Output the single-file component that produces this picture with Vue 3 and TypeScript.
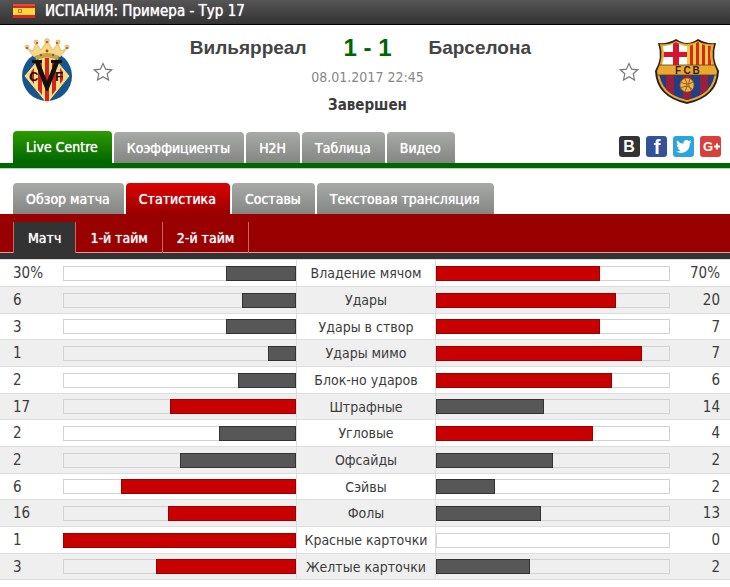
<script setup lang="ts">
import { computed, ref } from 'vue'

interface Stat {
  label: string
  home: number
  away: number
  unit?: string
}

const mainTabs: string[] = ['Live Centre', 'Коэффициенты', 'H2H', 'Таблица', 'Видео']
const subTabs: string[] = ['Обзор матча', 'Статистика', 'Составы', 'Текстовая трансляция']
const periods: string[] = ['Матч', '1-й тайм', '2-й тайм']

const mainTab = ref('Live Centre')
const subTab = ref('Статистика')
const period = ref('Матч')

const stats: Stat[] = [
  { label: 'Владение мячом', home: 30, away: 70, unit: '%' },
  { label: 'Удары', home: 6, away: 20 },
  { label: 'Удары в створ', home: 3, away: 7 },
  { label: 'Удары мимо', home: 1, away: 7 },
  { label: 'Блок-но ударов', home: 2, away: 6 },
  { label: 'Штрафные', home: 17, away: 14 },
  { label: 'Угловые', home: 2, away: 4 },
  { label: 'Офсайды', home: 2, away: 2 },
  { label: 'Сэйвы', home: 6, away: 2 },
  { label: 'Фолы', home: 16, away: 13 },
  { label: 'Красные карточки', home: 1, away: 0 },
  { label: 'Желтые карточки', home: 3, away: 2 },
]

const rows = computed(() =>
  stats.map((s) => {
    const homeShare = Math.floor((s.home / (s.home + s.away)) * 100)
    return { ...s, homeShare, awayShare: 100 - homeShare }
  }),
)
</script>

<template>
  <div class="page">
    <header class="league">
      <svg class="flag" viewBox="0 0 22 14" aria-hidden="true">
        <rect width="22" height="14" rx="1" fill="#d8281f" />
        <rect y="4" width="22" height="7" fill="#fbd93a" />
        <rect x="5" y="5" width="4" height="4" rx="1" fill="#c8702a" />
        <rect x="6" y="6" width="2" height="2" fill="#e9c9a0" />
        <rect width="22" height="2" fill="#f0604c" opacity="0.6" />
      </svg>
      <span>ИСПАНИЯ: Примера - Тур 17</span>
    </header>

    <section class="match">
      <svg class="crest-home" viewBox="0 0 52 66" aria-hidden="true">
        <circle cx="26" cy="38" r="25" fill="#17568c" />
        <path d="M26 12 L48 38 L26 65 L4 38 Z" fill="#f8df7c" stroke="#f3e3a0" stroke-width="1" />
        <path d="M17 25 L21 21 L21 57 L17 52 Z M24 20 H28 V63 H24 Z M31 21 L35 25 V52 L31 57 Z M10 34 L13 30 V46 L10 42 Z M39 30 L42 34 V42 L39 46 Z" fill="#d8201c" />
        <path d="M11 22 H21 V25 H19 L26 43 L33 25 H30 V22 H41 V25 H38 L27 53 H25 L14 25 H11 Z" fill="#111" />
        <text x="8" y="43" class="crest-letter">C</text>
        <text x="34" y="43" class="crest-letter">F</text>
        <path d="M13 19 L6 10 L12 13 L15 5 L20 12 L26 3 L32 12 L37 5 L40 13 L46 10 L39 19 Q26 14 13 19 Z" fill="#f4d988" stroke="#d9ad50" stroke-width="0.7" />
        <path d="M14 18 Q26 12 38 18 L37 22 Q26 17 15 22 Z" fill="#cda044" />
        <g fill="#ead07a" stroke="#d6a64b" stroke-width="0.6">
          <circle cx="6" cy="9" r="2" /><circle cx="15" cy="4" r="2" /><circle cx="26" cy="3" r="2.3" />
          <circle cx="37" cy="4" r="2" /><circle cx="46" cy="9" r="2" />
        </g>
        <g fill="#cc3425">
          <circle cx="6" cy="10" r="1" /><circle cx="16" cy="5" r="1" /><circle cx="26" cy="4" r="1" />
          <circle cx="36" cy="5" r="1" /><circle cx="46" cy="10" r="1" /><circle cx="26" cy="13" r="1.4" />
        </g>
        <g fill="#487a4a"><circle cx="20" cy="17" r="1.2" /><circle cx="32" cy="17" r="1.2" /></g>
      </svg>
      <button class="star" type="button" aria-label="Вильярреал">
        <svg viewBox="0 0 20 20"><path d="M10 1.5 L12.6 7.2 L18.7 7.8 L14.2 11.8 L15.5 18 L10 14.8 L4.5 18 L5.8 11.8 L1.3 7.8 L7.4 7.2 Z" /></svg>
      </button>

      <div class="summary">
        <h2 class="team team-home">Вильярреал</h2>
        <strong class="score">1 - 1</strong>
        <h2 class="team">Барселона</h2>
        <p class="date">08.01.2017 22:45</p>
        <p class="status">Завершен</p>
      </div>

      <button class="star" type="button" aria-label="Барселона">
        <svg viewBox="0 0 20 20"><path d="M10 1.5 L12.6 7.2 L18.7 7.8 L14.2 11.8 L15.5 18 L10 14.8 L4.5 18 L5.8 11.8 L1.3 7.8 L7.4 7.2 Z" /></svg>
      </button>
      <svg class="crest-away" viewBox="0 0 66 66" aria-hidden="true">
        <defs>
          <clipPath id="shield"><path d="M9 8 Q16 8 22 4 Q28 8 33 8 Q38 8 44 4 Q50 8 57 8 Q54 22 61 33 Q60 56 33 62 Q6 56 5 33 Q12 22 9 8 Z" /></clipPath>
        </defs>
        <path d="M4 5 Q14 6 22 1 Q28 5 33 5 Q38 5 44 1 Q52 6 62 5 Q57 20 65 33 Q64 59 33 66 Q2 59 1 33 Q9 20 4 5 Z" fill="#2a2118" />
        <path d="M6 6 Q15 7 22 3 Q28 6 33 6 Q38 6 44 3 Q51 7 60 6 Q56 20 63 33 Q62 58 33 64 Q4 58 3 33 Q10 20 6 6 Z" fill="#eca82e" />
        <g clip-path="url(#shield)">
          <rect x="5" y="4" width="28" height="23" fill="#fff" />
          <rect x="19" y="4" width="6" height="23" fill="#d8142c" />
          <rect x="5" y="14" width="28" height="5" fill="#d8142c" />
          <rect x="33" y="4" width="28" height="23" fill="#f7c93e" />
          <path d="M36 4h3v23h-3z M42 4h3v23h-3z M48 4h3v23h-3z M54 4h3v23h-3z" fill="#d12a28" />
          <rect x="3" y="27" width="60" height="10" fill="#eca82e" />
          <rect x="3" y="37" width="60" height="27" fill="#233e86" />
          <path d="M12 37h8v27h-8z M29 37h8v27h-8z M46 37h8v27h-8z" fill="#98203f" />
        </g>
        <path d="M4 27 H62 M3 37 H63" stroke="#59401b" stroke-width="0.8" />
        <text x="24" y="36" class="fcb">F</text>
        <text x="33" y="36" class="fcb">C</text>
        <text x="42" y="36" class="fcb">B</text>
        <circle cx="33" cy="47" r="7" fill="#efb443" stroke="#8a5a1a" stroke-width="0.6" />
        <path d="M27 44 Q33 48 39 44 M27 50 Q33 46 38 51 M31 41 Q35 47 31 53 M36 41 Q33 47 37 52" fill="none" stroke="#99601f" stroke-width="1" />
      </svg>
    </section>

    <nav class="tabs tabs-main">
      <button
        v-for="tab in mainTabs"
        :key="tab"
        type="button"
        class="tab"
        :class="{ 'tab-green': tab === mainTab }"
        @click="mainTab = tab"
      >{{ tab }}</button>
      <div class="social">
        <a href="#vk" class="vk" aria-label="ВКонтакте"><svg viewBox="0 0 21 21"><text x="10" y="16" font-size="16">B</text></svg></a>
        <a href="#facebook" class="fb" aria-label="Facebook"><svg viewBox="0 0 21 21"><text x="11" y="18" font-size="20">f</text></svg></a>
        <a href="#twitter" class="tw" aria-label="Twitter">
          <svg viewBox="0 0 21 21"><path d="M3 15.500Q6 15.600 7.600 14.200Q5.400 13.900 4.700 12Q5.600 12.100 6.200 11.800Q3.700 10.900 3.700 8.400Q4.400 8.800 5.100 8.800Q2.900 6.900 4.200 4.500Q6.800 7.600 10.500 7.800Q10 4.200 13.400 3.900Q14.900 3.900 15.800 4.900Q17 4.700 17.900 4.100Q17.500 5.300 16.500 5.900Q17.600 5.800 18.500 5.300Q17.700 6.600 16.800 7.200Q17 12.500 13.300 15.200Q8.500 18.500 3 15.500Z" /></svg>
        </a>
        <a href="#google" class="gp" aria-label="Google+"><svg viewBox="0 0 21 21"><text x="8" y="15" font-size="13">G</text><path d="M14 9.500h2v-2h2v2h2v2h-2v2h-2v-2h-2z" /></svg></a>
      </div>
    </nav>

    <nav class="tabs tabs-sub">
      <button
        v-for="tab in subTabs"
        :key="tab"
        type="button"
        class="tab"
        :class="{ 'tab-red': tab === subTab }"
        @click="subTab = tab"
      >{{ tab }}</button>
    </nav>

    <nav class="periods">
      <button
        v-for="p in periods"
        :key="p"
        type="button"
        class="period"
        :class="{ 'period-active': p === period }"
        @click="period = p"
      >{{ p }}</button>
    </nav>

    <table class="stats">
      <colgroup>
        <col class="col-home" />
        <col />
        <col class="col-label" />
        <col />
        <col class="col-away" />
      </colgroup>
      <tbody>
        <tr v-for="row in rows" :key="row.label">
          <td class="value-home">{{ row.home }}{{ row.unit }}</td>
          <td class="cell-home">
            <div class="bar bar-home">
              <div v-if="row.homeShare" class="fill" :class="{ lead: row.home > row.away }" :style="{ width: row.homeShare + '%' }"></div>
            </div>
          </td>
          <th scope="row">{{ row.label }}</th>
          <td>
            <div class="bar">
              <div v-if="row.away" class="fill" :class="{ lead: row.away > row.home }" :style="{ width: row.awayShare + '%' }"></div>
            </div>
          </td>
          <td class="value-away">{{ row.away }}{{ row.unit }}</td>
        </tr>
      </tbody>
    </table>
  </div>
</template>

<style>
body {
  background: #fff;
}
</style>

<style scoped>
.page {
  font-family: 'DejaVu Sans Condensed', 'Noto Sans', sans-serif;
  font-size: 14px;
  color: #3c3c3c;
}

button {
  margin: 0;
  border: 0;
  padding: 0;
  background: none;
  font: inherit;
  cursor: pointer;
}

.league {
  display: flex;
  align-items: center;
  gap: 10px;
  box-sizing: border-box;
  height: 25px;
  padding: 0 13px 3px;
  border-bottom: 1px solid #000;
  background: linear-gradient(#555, #333);
  color: #fff;
  font-size: 15px;
  text-shadow: 0 0 1px #fff;
  white-space: nowrap;
}

.flag {
  width: 22px;
  height: 14px;
}

.match {
  display: flex;
  align-items: flex-start;
  padding: 12px 10px 0 21px;
  height: 94px;
}

.crest-home {
  width: 52px;
  height: 68px;
  margin-right: 20px;
}

.crest-away {
  width: 66px;
  height: 68px;
  margin-left: 15px;
}

.crest-letter {
  font: bold 13px 'Liberation Sans', sans-serif;
  fill: #111;
}

.fcb {
  font: bold 10px 'Liberation Sans', sans-serif;
  fill: #2a2118;
  text-anchor: middle;
}

.star {
  width: 20px;
  height: 20px;
  margin-top: 25px;
}

.star svg {
  display: block;
  width: 100%;
  height: 100%;
}

.star path {
  fill: #fff;
  stroke: #777;
  stroke-width: 1.2;
}

.summary {
  flex: 1;
  display: grid;
  grid-template-columns: 1fr auto 1fr;
  column-gap: 37px;
  align-items: center;
  padding-left: 3px;
  text-align: center;
}

.team {
  margin: 0;
  font: bold 19px/22px 'Liberation Sans', sans-serif;
  color: #444;
  text-align: left;
}

.team-home {
  text-align: right;
}

.score {
  font: bold 24px/22px 'Liberation Sans', sans-serif;
  color: #060;
}

.date,
.status {
  grid-column: 1 / -1;
  margin: 0;
  line-height: 20px;
}

.date {
  margin-top: 8px;
  color: #888;
}

.status {
  margin-top: 8px;
  font-size: 15px;
  font-weight: bold;
}

.tabs {
  display: flex;
  align-items: flex-end;
  gap: 2px;
  padding: 0 9px 0 13px;
}

.tabs-main {
  border-bottom: 5px solid #060;
  box-shadow: 0 1px 0 #b9d6b9;
}

.tabs-sub {
  margin-top: 15px;
}

.tab {
  height: 31px;
  padding: 0 14px 0 13px;
  border-radius: 4px 4px 0 0;
  background: linear-gradient(#a8aaa8, #848684);
  color: #fff;
  text-shadow: 0 0 1px #fff;
  white-space: nowrap;
}

.tab-green {
  height: 32px;
  background: linear-gradient(#2e9a00, #060);
}

.tab-red {
  background: linear-gradient(#dd0000, #900);
}

.social {
  display: flex;
  gap: 6px;
  margin-left: auto;
  align-self: flex-start;
  padding-top: 5px;
}

.social a {
  width: 21px;
  height: 21px;
  border-radius: 3px;
}

.social svg {
  display: block;
  fill: #fff;
  font-family: 'Liberation Sans', sans-serif;
  font-weight: bold;
  text-anchor: middle;
}

.vk { background: #333; }
.fb { background: #34529a; }
.tw { background: #2ba5dc; }
.gp { background: #d8403a; }

.periods {
  display: flex;
  padding: 8px 13px 0;
  border-bottom: 6px solid #333;
  background: #900;
  box-shadow: inset 0 -1px 0 #d8a0a0;
}

.period {
  height: 31px;
  padding: 0 14px;
  border-right: 1px solid #c66;
  color: #fff;
  text-shadow: 0 0 1px #fff;
}

.period-active {
  border-left: 1px solid #c66;
  background: #333;
}

.stats {
  width: 100%;
  table-layout: fixed;
  border-collapse: separate;
  border-spacing: 0;
  border-top: 1px solid #ddd;
  line-height: 20px;
}

.col-home { width: 62px; }
.col-label { width: 140px; }
.col-away { width: 60px; }

.stats td,
.stats th {
  box-sizing: border-box;
  height: 27px;
  padding: 0;
  border-bottom: 1px solid #ddd;
  font-weight: normal;
  white-space: nowrap;
}

.stats tr:nth-child(3n) > * {
  height: 26px;
}

.stats tr:nth-child(even) {
  background: #efefef;
}

.stats th {
  border-left: 1px solid #ddd;
  border-right: 1px solid #ddd;
}

.stats .value-home {
  padding-left: 13px;
  font-size: 15px;
}

.stats .value-away {
  padding-right: 10px;
  font-size: 15px;
  text-align: right;
}

.stats .cell-home {
  padding-left: 1px;
}

.bar {
  display: flex;
  box-sizing: border-box;
  height: 15px;
  box-shadow: inset 0 0 0 1px #d2d2d2;
}

.bar-home {
  justify-content: flex-end;
}

.fill {
  box-sizing: border-box;
  border: 1px solid #333;
  background: #575757;
}

.lead {
  border-color: #900;
  background: #c80000;
}
</style>
